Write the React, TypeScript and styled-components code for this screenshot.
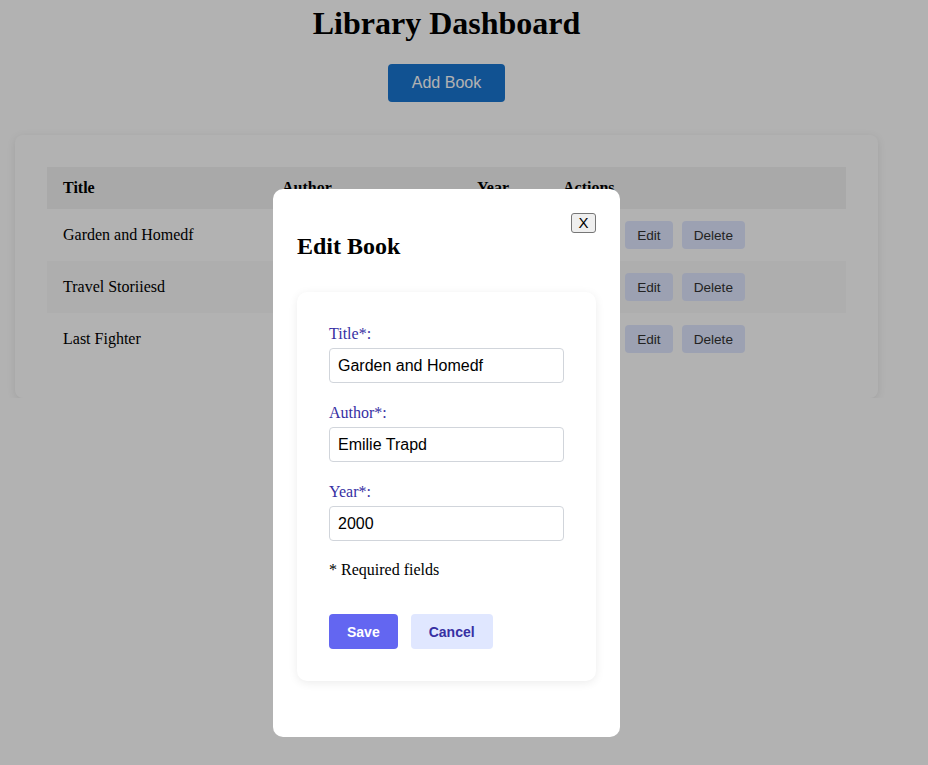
import React from "react";
import styled, { createGlobalStyle } from "styled-components";

const GlobalStyle = createGlobalStyle`
  html, body { margin: 0; padding: 0; background: #ffffff; }
  body { font-family: "Liberation Serif", "Times New Roman", serif; color: #000; }
  * { box-sizing: border-box; }
`;

const Page = styled.div`
  width: 893px;
  text-align: center;
`;

const Heading = styled.h1`
  font-family: "Liberation Serif", serif;
  font-size: 32px;
  font-weight: bold;
  margin: 5px 0 22px;
  line-height: 37px;
`;

const AddButton = styled.button`
  height: 38px;
  padding: 0 24px;
  border: none;
  border-radius: 4px;
  background: #1976d2;
  color: #ffffff;
  font-family: "Liberation Sans", Arial, sans-serif;
  font-size: 16px;
`;

const Card = styled.div`
  margin: 33px 15px 0;
  padding: 32px 32px 33px;
  background: #ffffff;
  border-radius: 8px;
  box-shadow: 0 2px 8px rgba(0, 0, 0, 0.1);
  text-align: left;
`;

const Table = styled.table`
  width: 100%;
  border-collapse: collapse;
  table-layout: fixed;
  font-size: 16px;
`;

const HeadRow = styled.tr`
  background: #f2f2f2;
`;

const Th = styled.th<{ $w: number }>`
  width: ${(p) => p.$w}px;
  text-align: left;
  padding: 12px 16px;
  font-weight: bold;
  line-height: 18px;
`;

const Row = styled.tr`
  &:nth-child(even) { background: #f9f9f9; }
`;

const Td = styled.td`
  padding: 12px 16px;
  line-height: 18px;
  vertical-align: middle;
`;

const Actions = styled.div`
  display: flex;
  gap: 9px;
`;

const SmallButton = styled.button`
  height: 28px;
  padding: 0 12px;
  border: none;
  border-radius: 4px;
  background: #e0e7ff;
  color: #333333;
  font-family: "Liberation Sans", Arial, sans-serif;
  font-size: 13.6px;
`;

const Overlay = styled.div`
  position: fixed;
  inset: 0;
  background: rgba(0, 0, 0, 0.3);
  display: flex;
  justify-content: center;
  align-items: flex-start;
  padding: 189px 35px 0 0;
`;

const Modal = styled.div`
  width: 347px;
  padding: 24px;
  background: #ffffff;
  border-radius: 10px;
  text-align: left;
`;

const CloseButton = styled.button`
  float: right;
  width: 25px;
  height: 20px;
  padding: 0;
  background: #efefef;
  border: 1px solid #767676;
  border-radius: 3px;
  font-family: "Liberation Sans", Arial, sans-serif;
  font-size: 15px;
  line-height: 18px;
  color: #000;
`;

const ModalTitle = styled.h2`
  font-size: 24px;
  font-weight: bold;
  margin: 20px 0;
  line-height: 27px;
`;

const FormCard = styled.form`
  margin: 32px 0 32px;
  padding: 32px;
  background: #ffffff;
  border-radius: 10px;
  box-shadow: 0 2px 10px rgba(0, 0, 0, 0.08);
`;

const Field = styled.div`
  display: flex;
  flex-direction: column;
  gap: 5px;
  margin-bottom: 20px;
`;

const Label = styled.label`
  padding-top: 1px;
  color: #3730a3;
  font-size: 16px;
  line-height: 18px;
`;

const Input = styled.input`
  height: 35px;
  width: 100%;
  padding: 0 8px;
  border: 1px solid #d1d5db;
  border-radius: 4px;
  font-family: "Liberation Sans", Arial, sans-serif;
  font-size: 16px;
  color: #000;
  background: #fff;
  outline: none;
`;

const Note = styled.p`
  margin: 1px 0 35px;
  font-size: 16px;
  line-height: 18px;
`;

const ButtonRow = styled.div`
  display: flex;
  gap: 13px;
`;

const FormButton = styled.button<{ $primary?: boolean }>`
  height: 35px;
  padding: 0 18px;
  border: none;
  border-radius: 4px;
  background: ${(p) => (p.$primary ? "#6366f1" : "#e0e7ff")};
  color: ${(p) => (p.$primary ? "#ffffff" : "#3730a3")};
  font-family: "Liberation Sans", Arial, sans-serif;
  font-size: 14px;
  font-weight: bold;
`;

const books = [
  { title: "Garden and Homedf", author: "Emilie Trapd", year: 2000 },
  { title: "Travel Storiiesd", author: "John Walker", year: 2012 },
  { title: "Last Fighter", author: "Mark Stone", year: 2018 },
];

export default function App() {
  return (
    <>
      <GlobalStyle />
      <Page>
        <Heading>Library Dashboard</Heading>
        <AddButton>Add Book</AddButton>
        <Card>
          <Table>
            <thead>
              <HeadRow>
                <Th $w={219}>Title</Th>
                <Th $w={195}>Author</Th>
                <Th $w={86}>Year</Th>
                <Th $w={299}>Actions</Th>
              </HeadRow>
            </thead>
            <tbody>
              {books.map((b) => (
                <Row key={b.title}>
                  <Td>{b.title}</Td>
                  <Td>{b.author}</Td>
                  <Td>{b.year}</Td>
                  <Td>
                    <Actions>
                      <SmallButton>View</SmallButton>
                      <SmallButton>Edit</SmallButton>
                      <SmallButton>Delete</SmallButton>
                    </Actions>
                  </Td>
                </Row>
              ))}
            </tbody>
          </Table>
        </Card>
      </Page>
      <Overlay>
        <Modal>
          <CloseButton>X</CloseButton>
          <ModalTitle>Edit Book</ModalTitle>
          <FormCard onSubmit={(e) => e.preventDefault()}>
            <Field>
              <Label>Title*:</Label>
              <Input defaultValue="Garden and Homedf" />
            </Field>
            <Field>
              <Label>Author*:</Label>
              <Input defaultValue="Emilie Trapd" />
            </Field>
            <Field>
              <Label>Year*:</Label>
              <Input defaultValue="2000" />
            </Field>
            <Note>* Required fields</Note>
            <ButtonRow>
              <FormButton $primary type="button">Save</FormButton>
              <FormButton type="button">Cancel</FormButton>
            </ButtonRow>
          </FormCard>
        </Modal>
      </Overlay>
    </>
  );
}
